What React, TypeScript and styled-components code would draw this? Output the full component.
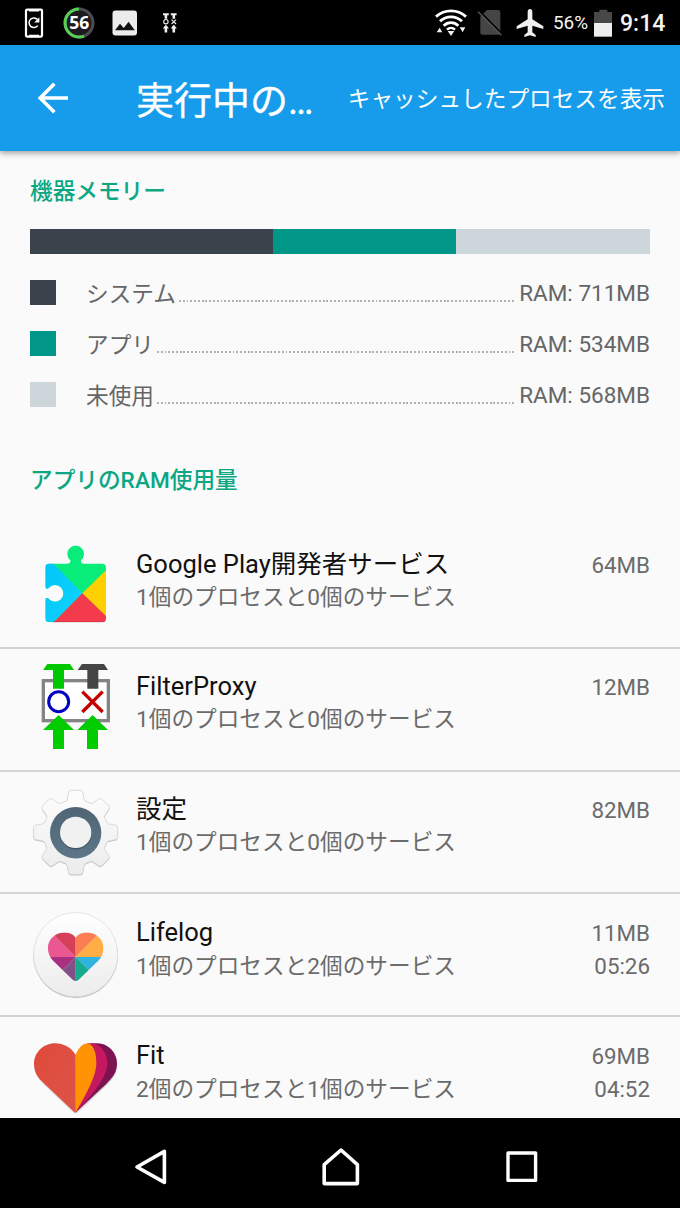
import React from "react";
import styled, { createGlobalStyle } from "styled-components";

const GlobalStyle = createGlobalStyle`
  * { box-sizing: border-box; }
  body {
    margin: 0;
    background: #fafafa;
    font-family: Roboto, "Noto Sans CJK JP", sans-serif;
  }
  svg { display: block; flex: none; overflow: visible; }
`;

const Screen = styled.div`
  display: flex;
  flex-direction: column;
  width: 680px;
  height: 1208px;
  overflow: hidden;
  background: #fafafa;
`;

const StatusBar = styled.header`
  display: flex;
  flex: none;
  align-items: center;
  height: 45px;
  padding: 0 16px 0 24px;
  background: #000;
  color: #f4f4f4;
`;

const StatusItem = styled.div<{ $gap?: number }>`
  flex: none;
  margin-left: ${(p) => p.$gap ?? 0}px;
`;

const Spacer = styled.div`
  flex: 1;
`;

const BatteryText = styled(StatusItem)`
  width: 38px;
  font-size: 18.9px;
  line-height: 46px;
  white-space: nowrap;
`;

const Clock = styled(StatusItem)`
  width: 44px;
  padding-top: 2px;
  font-size: 23px;
  font-weight: 500;
  line-height: 46px;
  white-space: nowrap;
`;

const AppBar = styled.nav`
  display: flex;
  flex: none;
  align-items: center;
  height: 106px;
  padding: 0 15px 0 36px;
  background: #169ceb;
  color: #fff;
  box-shadow: 0 2px 6px rgba(0, 0, 0, 0.38);
  z-index: 1;
`;

const Title = styled.h1`
  flex: 1;
  margin: 0 0 0 66px;
  padding-top: 6px;
  font-size: 38px;
  font-weight: 400;
  line-height: 48px;
  white-space: nowrap;
  -webkit-text-stroke: 0.3px #fff;
`;

const Action = styled.span`
  padding-top: 4px;
  font-size: 22.67px;
  line-height: 32px;
  white-space: nowrap;
`;

const Content = styled.main`
  flex: 1;
  min-height: 0;
  overflow: hidden;
  padding-top: 25px;
`;

const Heading = styled.h2<{ $top?: number }>`
  margin: ${(p) => p.$top ?? 0}px 30px 0;
  color: #0ba783;
  font-size: 22.67px;
  font-weight: 500;
  line-height: 32px;
  white-space: nowrap;
`;

const MemoryBar = styled.div`
  display: flex;
  height: 25px;
  margin: 21px 30px 13px;
`;

const Segment = styled.div<{ $share: number; $color: string }>`
  flex: ${(p) => p.$share} 0 0;
  background: ${(p) => p.$color};
`;

const LegendRow = styled.div`
  display: flex;
  align-items: center;
  height: 51px;
  margin: 0 30px;
  color: #666;
  font-size: 22.67px;
  line-height: 32px;
  white-space: nowrap;
`;

const Swatch = styled.span<{ $color: string }>`
  width: 26px;
  height: 25px;
  margin-right: 30px;
  background: ${(p) => p.$color};
`;

const LegendLabel = styled.span`
  padding-top: 4px;
`;

const LegendValue = styled.span`
  font-size: 22.5px;
`;

const Leader = styled.span`
  flex: 1;
  height: 2px;
  margin: 17px 4px 0 3px;
  background: repeating-linear-gradient(to right, #b0b0b0 0 1.9px, transparent 1.9px 3.78px);
`;

const List = styled.ul`
  margin: 29px 0 0;
  padding: 0;
  list-style: none;
`;

const ListRow = styled.li`
  display: flex;
  height: 122.8px;
  padding: 0 30px;
  border-bottom: 2px solid #d3d3d3;
`;

const IconSlot = styled.div`
  flex: none;
  width: 106px;
  padding-top: 16px;
`;

const Body = styled.div`
  flex: 1;
  padding-top: 21.6px;
`;

const Line = styled.div`
  display: flex;
  justify-content: space-between;
  align-items: baseline;
  color: #6b6b6b;
  font-size: 22.67px;
  line-height: 32px;
  white-space: nowrap;
  & + & { margin-top: 1px; }
`;

const AppName = styled.span`
  color: #111;
  font-size: 25.5px;
`;

const Amount = styled.span`
  font-size: 22.35px;
`;

const NavBar = styled.footer`
  display: flex;
  flex: none;
  align-items: center;
  height: 90px;
  padding: 8px 0 0 134px;
  background: #000;
`;

const NavKey = styled.div<{ $gap?: number }>`
  margin-left: ${(p) => p.$gap ?? 0}px;
`;

const PhoneRefreshIcon = () => (
  <svg width="20" height="32" viewBox="0 0 20 32" fill="none" stroke="#fff">
    <rect x="2" y="2.6" width="16" height="27" rx="1" strokeWidth="2.2" />
    <path d="M5 3.2h10M5 29h10" strokeWidth="2.6" />
    <path d="M13.7 18.6A4.8 4.8 0 1 1 13.5 12.6" strokeWidth="1.5" />
    <path d="M15.4 10.2v5.2h-5.2z" fill="#fff" stroke="none" />
  </svg>
);

const GaugeIcon = () => (
  <svg width="32" height="32" viewBox="0 0 32 32">
    <circle cx="16" cy="16" r="14" fill="#1d1b20" stroke="#4c4b4e" strokeWidth="3" />
    <path d="M16 2A14 14 0 1 0 21 29.1" fill="none" stroke="#57cf57" strokeWidth="3" />
    <text x="16.2" y="22.3" textAnchor="middle" fill="#fff" fontFamily="Open Sans" fontWeight="700" fontSize="17.5">56</text>
  </svg>
);

const PictureIcon = () => (
  <svg width="26" height="26" viewBox="0 0 26 26">
    <rect x="0.5" y="0.5" width="24.5" height="25" rx="3" fill="#ececec" />
    <path d="M3 20.3 8 13.7l3.7 4.2 4.9-6.2 6.2 8.6z" fill="#111" />
  </svg>
);

const ProxyStatusIcon = () => (
  <svg width="14" height="20" viewBox="0 0 14 20" stroke="#f0f0f0" fill="none">
    <path d="M0 1.2h5.8M7.8 1.2h5.8" strokeWidth="2" />
    <path d="M2.9 1v4.7M10.8 1v4.7M2.9 13v6.5M10.8 13v6.5" strokeWidth="2.6" />
    <circle cx="2.9" cy="8.7" r="2.2" strokeWidth="1.1" />
    <path d="m8.5 6.6 4.6 4.4M13.1 6.6l-4.6 4.4" strokeWidth="1.1" />
    <path d="M-.2 15.4 2.9 11.8 6 15.4zM7.7 15.4l3.1-3.6 3.1 3.6z" fill="#f0f0f0" stroke="none" />
  </svg>
);

const WifiIcon = () => (
  <svg width="32" height="28" viewBox="0 0 96 84">
    <g fill="none" stroke="#fff" strokeWidth="8.5">
      <path d="M3 23C29 0 67 0 93 23" />
      <path d="M15 37C34 19 62 19 81 37" />
      <path d="M26 50C39 38 57 38 70 50" />
      <path d="M36 62C43 55 53 55 60 62" strokeWidth="7" />
    </g>
    <path d="M38 66h20L48 81zM5 70l9-14 8 14zM74 55h17l-8 15z" fill="#eee" />
  </svg>
);

const NoSimIcon = () => (
  <svg width="26" height="27" viewBox="0 0 78 81">
    <path d="M30 3h34q6 0 6 6v62q0 6-6 6H16q-6 0-6-6V23z" fill="#454545" />
    <path d="M6 5 76 76" stroke="#000" strokeWidth="5" />
    <path d="M3 8 73 79" stroke="#555" strokeWidth="4.5" />
  </svg>
);

const PlaneIcon = () => (
  <svg width="28" height="30" viewBox="0 0 84 90">
    <path d="M42 3c4 0 7 4 7 9v22l33 21v8L49 53v20l10 8v6l-17-5-17 5v-6l10-8V53L2 63v-8l33-21V12c0-5 3-9 7-9z" fill="#f0f0f0" />
  </svg>
);

const BatteryIcon = () => (
  <svg width="18" height="28" viewBox="0 0 54 84">
    <path d="M16 2h24v7h14v33H0V9h16z" fill="#484848" />
    <path d="M0 42h54v41H0z" fill="#eee" />
  </svg>
);

const BackArrow = () => (
  <svg width="34" height="34" viewBox="0 0 34 34" fill="none" stroke="#fff" strokeWidth="3.6">
    <path d="M32 17H5M18.4 2.8 4.2 17l14.2 14.2" />
  </svg>
);

const PlayServicesIcon = () => (
  <svg width="90" height="90" viewBox="30 36 270 270">
    <defs>
      <clipPath id="puzzle">
        <path d="M88 101H141Q153 101 151 91A25 25 0 1 1 183 91Q181 101 193 101H246Q258 101 258 113V265Q258 277 246 277H88Q76 277 76 265V211Q76 201 86 206A25 25 0 1 0 86 174Q76 180 76 169V113Q76 101 88 101Z" />
      </clipPath>
      <linearGradient id="playBlue" x2="1" y2="1">
        <stop offset="0" stopColor="#00c3f8" />
        <stop offset="1" stopColor="#10d5ff" />
      </linearGradient>
    </defs>
    <g clipPath="url(#puzzle)">
      <path d="M70 40h195v240H70z" fill="#08ec79" />
      <path d="M70 70 187 190 94 284H70z" fill="url(#playBlue)" />
      <path d="M265 114 187 190 265 266z" fill="#ffd000" />
      <path d="M187 190 265 265v20H93z" fill="#f33b4b" />
      <path d="M100 274h158v4H97z" fill="#d93043" />
    </g>
  </svg>
);

const FilterProxyIcon = () => (
  <svg width="90" height="90" viewBox="30 45 270 270">
    <rect x="70" y="92" width="195" height="120" fill="#fff" stroke="#848484" strokeWidth="10" />
    <path d="M82 42h68l12 18h-30v56H99V60H69z" fill="#00c800" />
    <path d="M186 42h66l12 18h-29v56h-33V60h-29z" fill="#454545" />
    <circle cx="116" cy="155" r="30" fill="none" stroke="#0000c0" strokeWidth="9" />
    <path d="m187 125 61 61M248 125l-61 61" stroke="#c40000" strokeWidth="10" />
    <path d="M116 195 162 240h-30v57H99v-57H69zM218 195l46 45h-30v57h-33v-57h-29z" fill="#00cc00" />
  </svg>
);

const gearPath = (() => {
  const at = (angle: number, radius: number) => {
    const a = (angle * Math.PI) / 180;
    return `${(167 + radius * Math.sin(a)).toFixed(1)} ${(171 - radius * Math.cos(a)).toFixed(1)}`;
  };
  const teeth = Array.from({ length: 8 }, (_, i) => {
    const c = i * 45;
    return [
      `${i ? "L" : "M"}${at(c - 14.5, 102)}`,
      `L${at(c - 10, 123)}`,
      `Q${at(c - 9, 127)} ${at(c - 6, 127)}`,
      `L${at(c + 6, 127)}`,
      `Q${at(c + 9, 127)} ${at(c + 10, 123)}`,
      `L${at(c + 14.5, 102)}`,
      `Q${at(c + 16, 96)} ${at(c + 22.5, 98)}`,
      `Q${at(c + 29, 96)} ${at(c + 30.5, 102)}`,
    ].join("");
  });
  return teeth.join("") + "Z";
})();

const SettingsIcon = () => (
  <svg width="90" height="90" viewBox="30 37.8 270 270">
    <defs>
      <linearGradient id="gear" x2="0" y2="1">
        <stop offset="0" stopColor="#fdfdfd" />
        <stop offset="1" stopColor="#ececec" />
      </linearGradient>
      <linearGradient id="ring" x2="0" y2="1">
        <stop offset="0" stopColor="#4f6575" />
        <stop offset="1" stopColor="#5c7688" />
      </linearGradient>
    </defs>
    <path d={gearPath} fill="#c0c0c0" transform="translate(0 3)" />
    <path d={gearPath} fill="url(#gear)" stroke="#d2d2d2" strokeWidth="2.5" strokeLinejoin="round" />
    <circle cx="167" cy="172" r="77" fill="url(#ring)" />
    <circle cx="167" cy="174" r="48" fill="#405666" />
    <circle cx="167" cy="171" r="47" fill="#f1f1f1" />
  </svg>
);

const LifelogIcon = () => (
  <svg width="90" height="90" viewBox="30 30 270 270">
    <defs>
      <linearGradient id="disc" x2="0" y2="1">
        <stop offset="0" stopColor="#fff" />
        <stop offset="1" stopColor="#ececec" />
      </linearGradient>
      <clipPath id="lifeHeart">
        <path d="M167 113C154 95 124 93 103 107C79 124 78 158 97 180L158 239Q167 247 176 239L237 180C256 158 255 124 231 107C210 93 180 95 167 113Z" />
      </clipPath>
    </defs>
    <circle cx="167" cy="167" r="127" fill="#b9b9b9" />
    <circle cx="167" cy="164" r="126.5" fill="url(#disc)" stroke="#d9d9d9" strokeWidth="2" />
    <g clipPath="url(#lifeHeart)">
      <path d="M167 171H70V74z" fill="#eb5790" />
      <path d="M167 171 70 74h97z" fill="#d63f58" />
      <path d="M167 171V74h97z" fill="#fb7d52" />
      <path d="M167 171 264 74v97z" fill="#ffad45" />
      <path d="M167 171h97l-48 49z" fill="#30b4df" />
      <path d="M167 171 216 220l-49 40z" fill="#16ab8d" />
      <path d="M167 171v89l-49-40z" fill="#815087" />
      <path d="M167 171 118 220 70 171z" fill="#a7307f" />
    </g>
  </svg>
);

const FitIcon = () => (
  <svg width="90" height="85" viewBox="30 39.6 270 255">
    <defs>
      <linearGradient id="fitRed" x2="1" y2="1">
        <stop offset="0" stopColor="#df4a3c" />
        <stop offset="1" stopColor="#dd5447" />
      </linearGradient>
    </defs>
    <path d="M43 138Q44 168 71 194L160 278Q167 284 174 278L263 194Q290 168 291 138z" fill="#c9c9c9" opacity=".65" />
    <path d="M215 70H232C266 71 291 98 291 132C291 158 277 175 258 193L167 278z" fill="#7d1350" />
    <path d="M202 70H218C246 75 262 101 262 134C258 174 222 220 167 278z" fill="#c5185f" />
    <path d="M167 105C174 84 188 70 205 70C222 77 230 101 229 134C226 174 202 216 167 278z" fill="#ff9303" />
    <path d="M167 105C153 82 131 70 105 70C70 70 42 98 42 132C42 158 54 175 73 192L160 274Q164 278 167 278z" fill="url(#fitRed)" />
  </svg>
);

const BackKey = () => (
  <svg width="33" height="36" viewBox="0 0 33 36" fill="none" stroke="#fff" strokeWidth="3.6" strokeLinejoin="round">
    <path d="M30.4 2.4v31L3 18z" />
  </svg>
);

const HomeKey = () => (
  <svg width="38" height="38" viewBox="0 0 38 38" fill="none" stroke="#fff" strokeWidth="3.6" strokeLinejoin="round">
    <path d="M19 2 35.4 16.6v19H2.2v-19z" />
  </svg>
);

const RecentsKey = () => (
  <svg width="32" height="32" viewBox="0 0 32 32" fill="none" stroke="#fff" strokeWidth="3.4" strokeLinejoin="round">
    <rect x="2" y="2" width="27.6" height="27.4" />
  </svg>
);

const memory = [
  { label: "システム", mb: 711, color: "#3a434b" },
  { label: "アプリ", mb: 534, color: "#009688" },
  { label: "未使用", mb: 568, color: "#cdd6db" },
];

const apps = [
  { name: "Google Play開発者サービス", detail: "1個のプロセスと0個のサービス", size: "64MB", Icon: PlayServicesIcon },
  { name: "FilterProxy", detail: "1個のプロセスと0個のサービス", size: "12MB", Icon: FilterProxyIcon },
  { name: "設定", detail: "1個のプロセスと0個のサービス", size: "82MB", Icon: SettingsIcon },
  { name: "Lifelog", detail: "1個のプロセスと2個のサービス", size: "11MB", time: "05:26", Icon: LifelogIcon },
  { name: "Fit", detail: "2個のプロセスと1個のサービス", size: "69MB", time: "04:52", Icon: FitIcon },
];

export default function App() {
  return (
    <Screen>
      <GlobalStyle />
      <StatusBar>
        <StatusItem><PhoneRefreshIcon /></StatusItem>
        <StatusItem $gap={19}><GaugeIcon /></StatusItem>
        <StatusItem $gap={17}><PictureIcon /></StatusItem>
        <StatusItem $gap={25}><ProxyStatusIcon /></StatusItem>
        <Spacer />
        <StatusItem><WifiIcon /></StatusItem>
        <StatusItem $gap={10}><NoSimIcon /></StatusItem>
        <StatusItem $gap={13}><PlaneIcon /></StatusItem>
        <BatteryText $gap={9}>56%</BatteryText>
        <StatusItem $gap={3}><BatteryIcon /></StatusItem>
        <Clock $gap={8}>9:14</Clock>
      </StatusBar>
      <AppBar>
        <BackArrow />
        <Title>実行中の…</Title>
        <Action>キャッシュしたプロセスを表示</Action>
      </AppBar>
      <Content>
        <Heading>機器メモリー</Heading>
        <MemoryBar>
          {memory.map((m) => (
            <Segment key={m.label} $share={m.mb} $color={m.color} />
          ))}
        </MemoryBar>
        {memory.map((m) => (
          <LegendRow key={m.label}>
            <Swatch $color={m.color} />
            <LegendLabel>{m.label}</LegendLabel>
            <Leader />
            <LegendValue>RAM: {m.mb}MB</LegendValue>
          </LegendRow>
        ))}
        <Heading $top={45}>アプリのRAM使用量</Heading>
        <List>
          {apps.map(({ name, detail, size, time, Icon }) => (
            <ListRow key={name}>
              <IconSlot><Icon /></IconSlot>
              <Body>
                <Line>
                  <AppName>{name}</AppName>
                  <Amount>{size}</Amount>
                </Line>
                <Line>
                  <span>{detail}</span>
                  {time && <Amount>{time}</Amount>}
                </Line>
              </Body>
            </ListRow>
          ))}
        </List>
      </Content>
      <NavBar>
        <NavKey><BackKey /></NavKey>
        <NavKey $gap={154.6}><HomeKey /></NavKey>
        <NavKey $gap={146.2}><RecentsKey /></NavKey>
      </NavBar>
    </Screen>
  );
}
